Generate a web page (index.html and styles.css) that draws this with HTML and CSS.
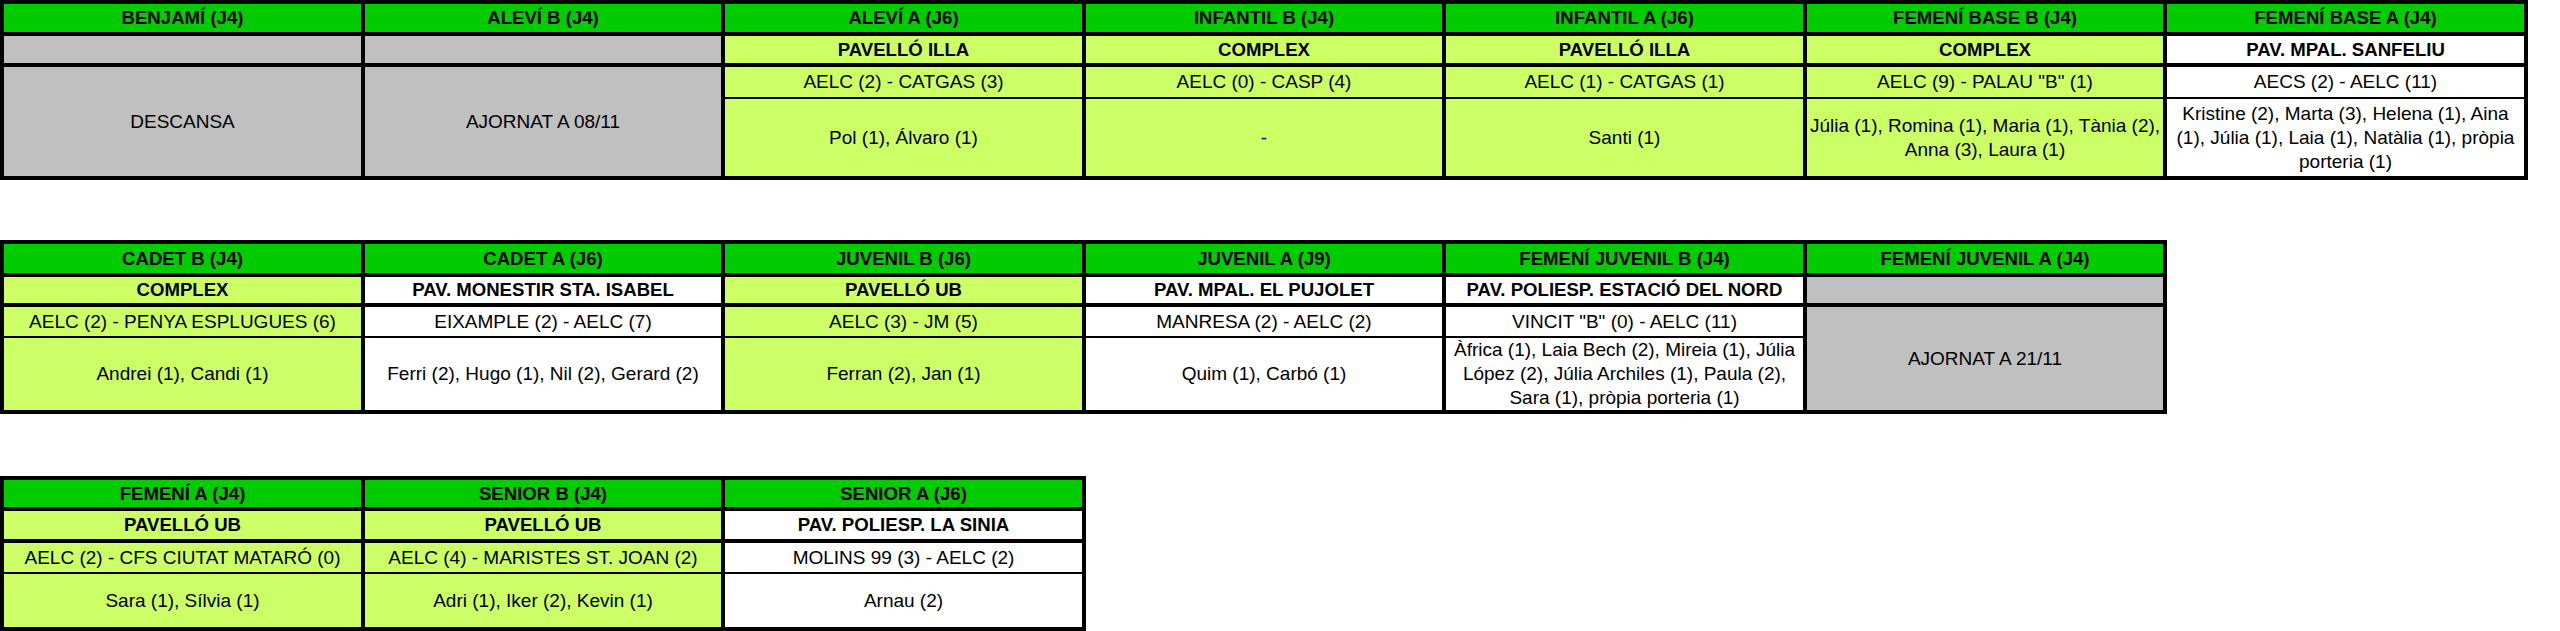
FILE: index.html
```html
<!DOCTYPE html>
<html lang="ca">
<head>
<meta charset="utf-8">
<title>Resultats</title>
<link rel="stylesheet" href="styles.css">
</head>
<body>
<div class="page">
  <div class="sheet sheet-7 rows-a">
    <div class="c h">BENJAMÍ (J4)</div>
    <div class="c h">ALEVÍ B (J4)</div>
    <div class="c h">ALEVÍ A (J6)</div>
    <div class="c h">INFANTIL B (J4)</div>
    <div class="c h">INFANTIL A (J6)</div>
    <div class="c h">FEMENÍ BASE B (J4)</div>
    <div class="c h">FEMENÍ BASE A (J4)</div>

    <div class="c v g"></div>
    <div class="c v g"></div>
    <div class="c v lg">PAVELLÓ ILLA</div>
    <div class="c v lg">COMPLEX</div>
    <div class="c v lg">PAVELLÓ ILLA</div>
    <div class="c v lg">COMPLEX</div>
    <div class="c v w">PAV. MPAL. SANFELIU</div>

    <div class="c g span2">DESCANSA</div>
    <div class="c g span2">AJORNAT A 08/11</div>
    <div class="c lg">AELC (2) - CATGAS (3)</div>
    <div class="c lg">AELC (0) - CASP (4)</div>
    <div class="c lg">AELC (1) - CATGAS (1)</div>
    <div class="c lg">AELC (9) - PALAU "B" (1)</div>
    <div class="c w">AECS (2) - AELC (11)</div>

    <div class="c sc lg">Pol (1), Álvaro (1)</div>
    <div class="c sc lg">-</div>
    <div class="c sc lg">Santi (1)</div>
    <div class="c sc lg">Júlia (1), Romina (1), Maria (1), Tània (2), Anna (3), Laura (1)</div>
    <div class="c sc w">Kristine (2), Marta (3), Helena (1), Aina (1), Júlia (1), Laia (1), Natàlia (1), pròpia porteria (1)</div>
  </div>

  <div class="sheet sheet-6 rows-b">
    <div class="c h">CADET B (J4)</div>
    <div class="c h">CADET A (J6)</div>
    <div class="c h">JUVENIL B (J6)</div>
    <div class="c h">JUVENIL A (J9)</div>
    <div class="c h">FEMENÍ JUVENIL B (J4)</div>
    <div class="c h">FEMENÍ JUVENIL A (J4)</div>

    <div class="c v lg">COMPLEX</div>
    <div class="c v w">PAV. MONESTIR STA. ISABEL</div>
    <div class="c v lg">PAVELLÓ UB</div>
    <div class="c v w">PAV. MPAL. EL PUJOLET</div>
    <div class="c v w">PAV. POLIESP. ESTACIÓ DEL NORD</div>
    <div class="c v g"></div>

    <div class="c lg">AELC (2) - PENYA ESPLUGUES (6)</div>
    <div class="c w">EIXAMPLE (2) - AELC (7)</div>
    <div class="c lg">AELC (3) - JM (5)</div>
    <div class="c w">MANRESA (2) - AELC (2)</div>
    <div class="c w">VINCIT "B" (0) - AELC (11)</div>
    <div class="c g span2">AJORNAT A 21/11</div>

    <div class="c sc lg">Andrei (1), Candi (1)</div>
    <div class="c sc w">Ferri (2), Hugo (1), Nil (2), Gerard (2)</div>
    <div class="c sc lg">Ferran (2), Jan (1)</div>
    <div class="c sc w">Quim (1), Carbó (1)</div>
    <div class="c sc w">Àfrica (1), Laia Bech (2), Mireia (1), Júlia López (2), Júlia Archiles (1), Paula (2), Sara (1), pròpia porteria (1)</div>
  </div>

  <div class="sheet sheet-3 rows-c">
    <div class="c h">FEMENÍ A (J4)</div>
    <div class="c h">SENIOR B (J4)</div>
    <div class="c h">SENIOR A (J6)</div>

    <div class="c v lg">PAVELLÓ UB</div>
    <div class="c v lg">PAVELLÓ UB</div>
    <div class="c v w">PAV. POLIESP. LA SINIA</div>

    <div class="c lg">AELC (2) - CFS CIUTAT MATARÓ (0)</div>
    <div class="c lg">AELC (4) - MARISTES ST. JOAN (2)</div>
    <div class="c w">MOLINS 99 (3) - AELC (2)</div>

    <div class="c sc lg">Sara (1), Sílvia (1)</div>
    <div class="c sc lg">Adri (1), Iker (2), Kevin (1)</div>
    <div class="c sc w">Arnau (2)</div>
  </div>
</div>
</body>
</html>
```

FILE: styles.css
```css
html, body {
  margin: 0;
  padding: 0;
  background: #ffffff;
}

.page {
  display: flex;
  flex-direction: column;
  align-items: flex-start;
  gap: 0;
}

.sheet {
  display: grid;
  gap: 4px;
  padding: 4px;
  background: #000000;
  width: max-content;
}

.sheet-7 {
  grid-template-columns: 357px 356px 357px 356px 357px 356px 357px;
}

.sheet-6 {
  grid-template-columns: 357px 356px 357px 356px 357px 356px;
  margin-top: 60px;
}

.sheet-3 {
  grid-template-columns: 357px 356px 357px;
  margin-top: 62px;
}

.rows-a { grid-template-rows: 28px 27px 30px 75px; }
.rows-b { grid-template-rows: 29px 26px 29px 70px; }
.rows-c { grid-template-rows: 27px 28px 29px 51px; }

.c {
  display: flex;
  align-items: center;
  justify-content: center;
  text-align: center;
  padding: 0 2px;
  font-family: "Liberation Sans", Arial, sans-serif;
  font-size: 19px;
  line-height: 24px;
  color: #000000;
  overflow: hidden;
  min-width: 0;
}

.h {
  background: #00cc00;
  font-weight: bold;
  font-size: 18.6px;
}

.v {
  font-weight: bold;
  font-size: 18.6px;
}

.lg { background: #ccff66; }
.g  { background: #c0c0c0; }
.w  { background: #ffffff; }

.span2 {
  grid-row: span 2;
}

.sc {
  margin-top: -2px;
}
```
